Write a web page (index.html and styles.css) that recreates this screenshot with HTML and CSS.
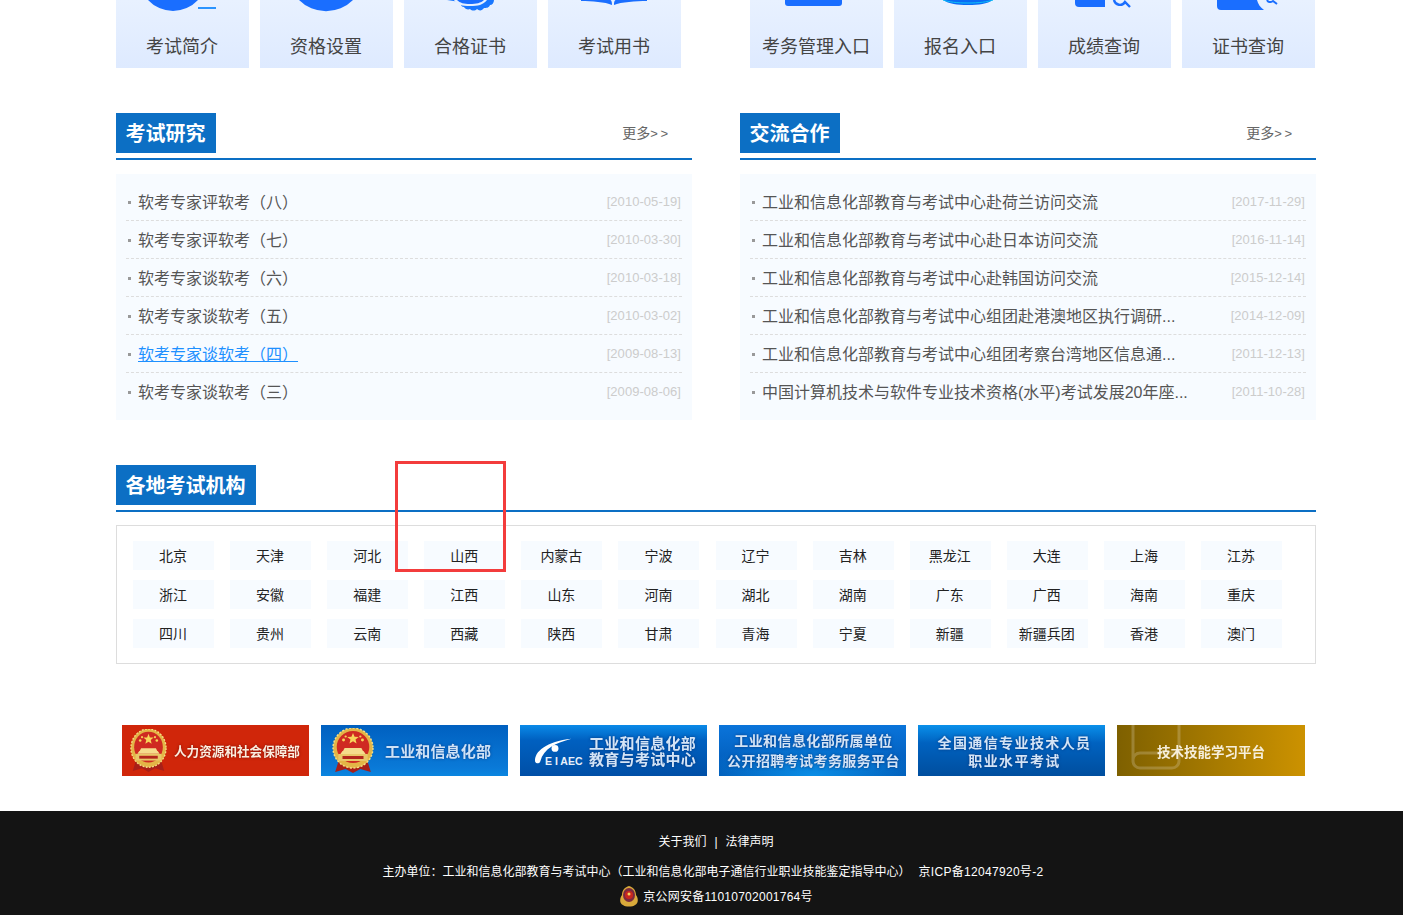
FILE: index.html
```html
<!DOCTYPE html>
<html lang="zh-CN">
<head>
<meta charset="utf-8">
<title>中国计算机技术职业资格网</title>
<link rel="stylesheet" href="styles.css">
</head>
<body>
<svg class="defs" width="0" height="0" aria-hidden="true">
  <defs>
    <symbol id="emblem" viewBox="0 0 40 46" preserveAspectRatio="none">
      <path d="M6 34 L3 44 L13 41 L20 45 L27 41 L37 44 L34 34 Z" fill="#a81f18"/>
      <ellipse cx="20" cy="20" rx="19" ry="20" fill="#e3b546"/>
      <ellipse cx="20" cy="20" rx="19" ry="20" fill="none" stroke="#f6de85" stroke-width="1.4" stroke-dasharray="2 1.5"/>
      <ellipse cx="20" cy="19" rx="15.5" ry="16" fill="#cf2a22"/>
      <path d="M20 5l1.5 3.8 4 .2-3.1 2.6 1 3.9-3.4-2.2-3.4 2.2 1-3.9-3.1-2.6 4-.2z" fill="#f7d45a"/>
      <circle cx="11" cy="12" r="1.4" fill="#f7d45a"/>
      <circle cx="29" cy="12" r="1.4" fill="#f7d45a"/>
      <circle cx="13" cy="8.5" r="1.1" fill="#f7d45a"/>
      <circle cx="27" cy="8.5" r="1.1" fill="#f7d45a"/>
      <path d="M10 23h20l2 3H8zM12 20h16l1.5 3h-19z" fill="#f5dc8c"/>
      <rect x="6" y="26" width="28" height="7" fill="#e9c768"/>
      <rect x="10" y="28" width="20" height="3" fill="#b3261c"/>
    </symbol>
    <symbol id="badge" viewBox="0 0 20 22">
      <path d="M10 0C14 1 17 4 17 9c3 4 2 9-1 10-2 2-10 2-12 0-3-1-4-6-1-10C3 4 6 1 10 0z" fill="#d9a93a"/>
      <ellipse cx="10" cy="9" rx="6" ry="7" fill="#7a2a3e"/>
      <circle cx="10" cy="9" r="4" fill="#c8261f"/>
      <circle cx="10" cy="8" r="1.5" fill="#f5d35a"/>
    </symbol>
  </defs>
</svg>

<main class="wrap">
  <section class="tiles">
    <div class="tile-group">
      <a class="tile">
        <svg class="tile-icon" viewBox="0 0 133 20"><path d="M32 0h50a34 34 0 0 1-50 0z" fill="#1a6eff"/><rect x="82" y="7" width="18" height="2" fill="#2a94ff"/></svg>
        <span class="tile-label">考试简介</span>
      </a>
      <a class="tile">
        <svg class="tile-icon" viewBox="0 0 133 20"><path d="M39 0h54a38 38 0 0 1-54 0z" fill="#1a6eff"/></svg>
        <span class="tile-label">资格设置</span>
      </a>
      <a class="tile">
        <svg class="tile-icon" viewBox="0 0 133 20"><path d="M43 0h47c0 3-2 5-4 5-1 3-4 3-6 3-2 3-5 3-7 1-2 2-5 2-7 0-2 1-5 0-6-2-2 0-4-2-4-5z" fill="#1a78ff"/><path d="M50 0c3 5 8 6 16 6s13-1 17-6z" fill="#e6f0ff"/><path d="M53 0c3 3 7 4 13 4s11-1 14-4z" fill="#1a6eff"/></svg>
        <span class="tile-label">合格证书</span>
      </a>
      <a class="tile">
        <svg class="tile-icon" viewBox="0 0 133 20"><path d="M33 0h29c1 0 2 1 2 5-7-3-20-4-31-4zM99 0H68c-1 0-2 1-2 5 7-3 22-4 33-4z" fill="#1a6eff"/></svg>
        <span class="tile-label">考试用书</span>
      </a>
    </div>
    <div class="tile-group">
      <a class="tile">
        <svg class="tile-icon" viewBox="0 0 133 20"><path d="M35 0h57v3a3 3 0 0 1-3 3H38a3 3 0 0 1-3-3z" fill="#1a6eff"/></svg>
        <span class="tile-label">考务管理入口</span>
      </a>
      <a class="tile">
        <svg class="tile-icon" viewBox="0 0 133 20"><path d="M49 0h50c-6 4-14 5-25 5S55 4 49 0z" fill="#0a6cf5"/><path d="M49 0c6 2 14 3 25 3s19-1 25-3" fill="none" stroke="#10c0f5" stroke-width="1"/></svg>
        <span class="tile-label">报名入口</span>
      </a>
      <a class="tile">
        <svg class="tile-icon" viewBox="0 0 133 20"><path d="M37 0h30v7H41a4 4 0 0 1-4-4z" fill="#1a6eff"/><path d="M76 0a6 6 0 0 0 11 2l5 5" fill="none" stroke="#1a6eff" stroke-width="2.4"/></svg>
        <span class="tile-label">成绩查询</span>
      </a>
      <a class="tile">
        <svg class="tile-icon" viewBox="0 0 133 20"><path d="M35 0h40c1 4 3 7 7 10H39a4 4 0 0 1-4-4z" fill="#1a6eff"/><path d="M85 0c1 2 3 3 6 1l4 3" fill="none" stroke="#1a6eff" stroke-width="2"/></svg>
        <span class="tile-label">证书查询</span>
      </a>
    </div>
  </section>

  <section class="news">
    <div class="news-col">
      <header class="sec-head"><h2 class="sec-title">考试研究</h2><a class="more">更多<span class="more-arrow">&gt;&gt;</span></a></header>
      <ul class="news-list">
        <li class="news-row"><a class="news-link">软考专家评软考（八）</a><time class="news-date">[2010-05-19]</time></li>
        <li class="news-row"><a class="news-link">软考专家评软考（七）</a><time class="news-date">[2010-03-30]</time></li>
        <li class="news-row"><a class="news-link">软考专家谈软考（六）</a><time class="news-date">[2010-03-18]</time></li>
        <li class="news-row"><a class="news-link">软考专家谈软考（五）</a><time class="news-date">[2010-03-02]</time></li>
        <li class="news-row"><a class="news-link is-hover">软考专家谈软考（四）</a><time class="news-date">[2009-08-13]</time></li>
        <li class="news-row"><a class="news-link">软考专家谈软考（三）</a><time class="news-date">[2009-08-06]</time></li>
      </ul>
    </div>
    <div class="news-col">
      <header class="sec-head"><h2 class="sec-title">交流合作</h2><a class="more">更多<span class="more-arrow">&gt;&gt;</span></a></header>
      <ul class="news-list">
        <li class="news-row"><a class="news-link">工业和信息化部教育与考试中心赴荷兰访问交流</a><time class="news-date">[2017-11-29]</time></li>
        <li class="news-row"><a class="news-link">工业和信息化部教育与考试中心赴日本访问交流</a><time class="news-date">[2016-11-14]</time></li>
        <li class="news-row"><a class="news-link">工业和信息化部教育与考试中心赴韩国访问交流</a><time class="news-date">[2015-12-14]</time></li>
        <li class="news-row"><a class="news-link">工业和信息化部教育与考试中心组团赴港澳地区执行调研...</a><time class="news-date">[2014-12-09]</time></li>
        <li class="news-row"><a class="news-link">工业和信息化部教育与考试中心组团考察台湾地区信息通...</a><time class="news-date">[2011-12-13]</time></li>
        <li class="news-row"><a class="news-link">中国计算机技术与软件专业技术资格(水平)考试发展20年座...</a><time class="news-date">[2011-10-28]</time></li>
      </ul>
    </div>
  </section>

  <section class="regions">
    <header class="sec-head"><h2 class="sec-title">各地考试机构</h2></header>
    <div class="region-box">
      <a class="region">北京</a><a class="region">天津</a><a class="region">河北</a><a class="region">山西</a><a class="region">内蒙古</a><a class="region">宁波</a><a class="region">辽宁</a><a class="region">吉林</a><a class="region">黑龙江</a><a class="region">大连</a><a class="region">上海</a><a class="region">江苏</a>
      <a class="region">浙江</a><a class="region">安徽</a><a class="region">福建</a><a class="region">江西</a><a class="region">山东</a><a class="region">河南</a><a class="region">湖北</a><a class="region">湖南</a><a class="region">广东</a><a class="region">广西</a><a class="region">海南</a><a class="region">重庆</a>
      <a class="region">四川</a><a class="region">贵州</a><a class="region">云南</a><a class="region">西藏</a><a class="region">陕西</a><a class="region">甘肃</a><a class="region">青海</a><a class="region">宁夏</a><a class="region">新疆</a><a class="region">新疆兵团</a><a class="region">香港</a><a class="region">澳门</a>
    </div>
    <div class="highlight"></div>
  </section>

  <section class="banners">
    <a class="banner banner-red">
      <svg class="emblem-sm"><use href="#emblem"/></svg>
      <span class="b-text b-text-red">人力资源和社会保障部</span>
    </a>
    <a class="banner banner-blue">
      <svg class="emblem-lg"><use href="#emblem"/></svg>
      <span class="b-text b-text-blue">工业和信息化部</span>
    </a>
    <a class="banner banner-dark">
      <span class="ceiaec">
        <svg class="ceiaec-mark" viewBox="0 0 48 30"><path d="M1 27C0 16 14 4 43 1 25 6 11 12 7 27c-1 3-5 3-6 0z" fill="#fff"/><circle cx="24" cy="12" r="4" fill="#fff"/></svg>
        <span class="ceiaec-name">E I AEC</span>
      </span>
      <span class="b-lines b-dark"><span>工业和信息化部</span><span>教育与考试中心</span></span>
    </a>
    <a class="banner banner-mid">
      <span class="b-lines b-center b-mid"><span>工业和信息化部所属单位</span><span>公开招聘考试考务服务平台</span></span>
    </a>
    <a class="banner banner-deep">
      <span class="b-lines b-center b-deep"><span>全国通信专业技术人员</span><span>职业水平考试</span></span>
    </a>
    <a class="banner banner-gold">
      <svg class="book-mark" viewBox="0 0 50 51"><path d="M2 0V36a7 7 0 0 0 7 7H41a7 7 0 0 0 7-7V0M2 35a7 7 0 0 1 7-7H48" fill="none" stroke="#fff" stroke-opacity=".2" stroke-width="3"/></svg>
      <span class="b-gold-text">技术技能学习平台</span>
    </a>
  </section>
</main>

<footer class="footer">
  <p class="foot-line foot-first"><a>关于我们</a><span class="foot-sep">|</span><a>法律声明</a></p>
  <p class="foot-line foot-second">主办单位：工业和信息化部教育与考试中心（工业和信息化部电子通信行业职业技能鉴定指导中心）<span class="foot-icp">京ICP备12047920号-2</span></p>
  <p class="foot-line foot-third"><svg class="foot-badge"><use href="#badge"/></svg><span>京公网安备11010702001764号</span></p>
</footer>
</body>
</html>
```
FILE: styles.css
```css
* { box-sizing: border-box; }
html, body { margin: 0; padding: 0; }
body {
  width: 1403px;
  height: 915px;
  overflow: hidden;
  background: #fff;
  color: #333;
  font-family: "Liberation Sans", "Noto Sans CJK SC", sans-serif;
}
.defs { position: absolute; }
a { color: inherit; text-decoration: none; }
ul { list-style: none; margin: 0; padding: 0; }
h2, p { margin: 0; }

.wrap { width: 1200px; margin-left: 116px; }

/* tiles */
.tiles { display: flex; justify-content: space-between; width: 1199px; }
.tile-group { display: flex; gap: 11px; }
.tile {
  display: flex;
  flex-direction: column;
  align-items: center;
  width: 133px;
  height: 68px;
  padding-right: 1px;
  background: linear-gradient(#e8f1ff, #deeaff);
}
.tile-icon { display: block; align-self: flex-start; width: 133px; height: 20px; flex: none; }
.tile-label { margin-top: 11px; font-size: 18px; line-height: 32px; color: #444; }

/* news */
.news { display: flex; justify-content: space-between; margin-top: 45px; }
.news-col { width: 576px; }
.sec-head {
  display: flex;
  justify-content: space-between;
  height: 47px;
  padding-bottom: 5px;
  border-bottom: 2px solid #0c6fc4;
}
.sec-title {
  height: 40px;
  padding: 0 10.5px 0 9.5px;
  background: #0c6fc4;
  color: #fff;
  font-size: 20px;
  font-weight: 700;
  line-height: 43px;
}
.more {
  margin-right: 21px;
  font-size: 14px;
  line-height: 40px;
  color: #666;
}
.more-arrow { letter-spacing: 2.8px; font-size: 13px; }
.news-list {
  margin-top: 14px;
  padding: 9px 10px;
  background: #f7fbff;
}
.news-row {
  position: relative;
  display: flex;
  justify-content: space-between;
  height: 38px;
  padding: 0 1px 0 12px;
  border-bottom: 1px dashed #ddd;
}
.news-row:last-child { border-bottom: 0; }
.news-row::before {
  content: "";
  position: absolute;
  left: 2px;
  top: 18px;
  width: 3px;
  height: 3px;
  background: #999;
}
.news-link { font-size: 16px; line-height: 39px; color: #555; }
.news-link.is-hover { color: #1e90ff; text-decoration: underline; }
.news-date { font-size: 13px; line-height: 37px; letter-spacing: .05px; color: #ccc; }

/* regions */
.regions { position: relative; margin-top: 45px; }
.region-box {
  display: grid;
  grid-template-columns: repeat(12, 81px);
  grid-auto-rows: 29px;
  column-gap: 16.1px;
  row-gap: 10px;
  height: 139px;
  margin-top: 13px;
  padding: 15px 16px;
  border: 1px solid #ddd;
}
.region {
  padding-right: 1px;
  background: #f7fbff;
  font-size: 14px;
  line-height: 31px;
  text-align: center;
  color: #222;
}
.highlight {
  position: absolute;
  left: 279px;
  top: -4px;
  width: 111px;
  height: 111px;
  border: 3px solid #f33c3c;
}

/* banners */
.banners { display: flex; gap: 12px; margin: 61px 0 0 6px; }
.banner {
  position: relative;
  display: flex;
  align-items: center;
  flex: none;
  width: 187px;
  height: 51px;
  overflow: hidden;
  color: #e8eefa;
  font-weight: 700;
}
.banner-red { background: #d0260a; }
.banner-blue { background: linear-gradient(#0060c0, #0a7ad8 85%, #0a86e0); }
.banner-dark { background: linear-gradient(#0a8ae8, #0060c0 30%, #004fa6); }
.banner-mid { background: radial-gradient(ellipse 60% 70% at 50% 100%, #0a8ee6, transparent), linear-gradient(#0a74da, #0058b4); justify-content: center; padding-left: 2px; }
.banner-deep { background: linear-gradient(#0a90ea, #0062c0 35%, #004e9e); justify-content: center; padding-left: 6px; }
.banner-gold { width: 188px; background: linear-gradient(90deg, #7e6000, #cc9200); justify-content: center; }

.emblem-sm { width: 37px; height: 44px; margin-left: 8px; flex: none; }
.emblem-lg { width: 42px; height: 46px; margin-left: 11px; flex: none; }
.b-text { white-space: nowrap; filter: blur(.3px); }
.b-text-red { margin-left: 7px; font-size: 12.6px; color: #fbeee0; text-shadow: 0 0 3px #7a1006; }
.b-text-blue { margin-left: 11px; font-size: 15px; letter-spacing: .15px; color: #cfe2f6; text-shadow: 0 0 3px #0a3f8a; }

.ceiaec { position: relative; display: block; width: 57px; height: 34px; margin-left: 12px; flex: none; }
.ceiaec-mark { position: absolute; left: 0; top: 4px; width: 46px; height: 26px; }
.ceiaec-name { position: absolute; left: 13px; top: 20px; font-size: 10.5px; line-height: 14px; color: #e8f0fa; white-space: nowrap; }

.b-lines {
  display: flex;
  flex-direction: column;
  color: #d4e4f6;
  text-shadow: 0 0 3px #06357a;
  white-space: nowrap;
  filter: blur(.3px);
}
.b-center { align-items: center; }
.b-dark { padding-top: 2px; font-size: 15px; line-height: 16px; letter-spacing: .3px; }
.b-mid { font-size: 14px; line-height: 20px; letter-spacing: .4px; }
.b-deep { padding-top: 3px; font-size: 14px; line-height: 18px; letter-spacing: 1.4px; }
.book-mark { position: absolute; left: 14px; top: 0; width: 50px; height: 51px; }
.b-gold-text { position: relative; font-size: 13.5px; color: #f6efdc; filter: blur(.3px); }

/* footer */
.footer {
  height: 104px;
  margin-top: 35px;
  padding: 21px 0 0 29px;
  background: #141414;
  color: #fff;
  font-size: 12px;
  text-align: center;
}
.foot-line { line-height: 20px; }
.foot-first { height: 30px; }
.foot-second { height: 24px; margin-left: -6px; }
.foot-sep { margin: 0 8px; }
.foot-icp { margin-left: 8px; letter-spacing: .3px; }
.foot-third { display: flex; justify-content: center; align-items: center; height: 22px; }
.foot-third span { letter-spacing: .25px; }
.foot-badge { width: 20px; height: 22px; margin-right: 4px; }
```
